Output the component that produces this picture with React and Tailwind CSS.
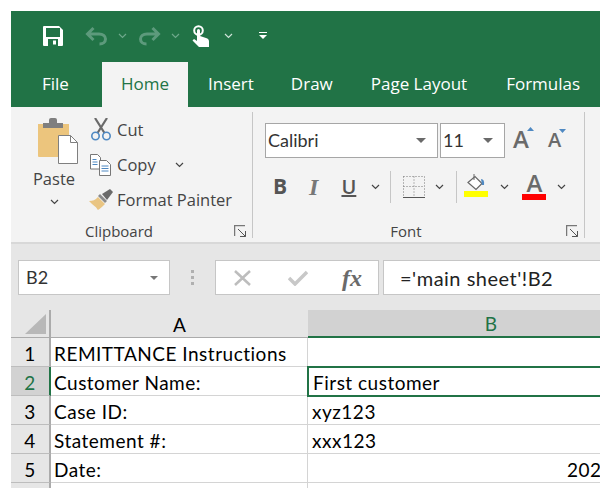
import React from 'react'

const UI = "font-['Open_Sans','Noto_Sans',sans-serif]"
const CELL = "font-['Lato','Open_Sans',sans-serif]"

const Chevron = ({ color = '#444', className = '' }) => (
  <svg width="9" height="6" viewBox="0 0 9 6" className={className}>
    <path d="M1 1l3.5 3.5L8 1" fill="none" stroke={color} strokeWidth="1.2" />
  </svg>
)

const Caret = () => (
  <svg width="10" height="5" viewBox="0 0 10 5"><path d="M0 0h10L5 5z" fill="#6a6a6a" /></svg>
)

const Launcher = () => (
  <svg width="13" height="13" viewBox="0 0 13 13">
    <path d="M.5 11V.5H11" fill="none" stroke="#777" strokeWidth="1.500" />
    <path d="M4 4l7.500 7.500M6 11.500h5.500V6" fill="none" stroke="#555" strokeWidth="1" />
  </svg>
)

const Sep = ({ className = '' }) => <div className={`w-px bg-[#c6c6c6] ${className}`}></div>

const SaveIcon = () => (
  <svg width="20" height="20" viewBox="0 0 20 20">
    <path fillRule="evenodd" d="M0 1a1 1 0 011-1h15l4 4v15a1 1 0 01-1 1H1a1 1 0 01-1-1zM3 2v9h14V2zM5 13v7h10v-7zM10 14.500h3v4h-3z" fill="#fff" />
  </svg>
)

const UndoIcon = ({ flip }) => (
  <svg width="23" height="20" viewBox="0 0 23 20" className={flip ? '-scale-x-100' : ''}>
    <path d="M8.500 2L2.500 8l6 6M3 8h11c4 0 6.500 2 6.500 5s-2.500 5-6 5" fill="none" stroke="#5d9a7c" strokeWidth="3" />
  </svg>
)

const TouchIcon = () => (
  <svg width="18" height="22" viewBox="0 0 18 22">
    <circle cx="6.500" cy="5.500" r="4.300" fill="none" stroke="#fff" strokeWidth="2" />
    <path d="M5 5.500a1.500 1.500 0 013 0V11l6 2c2 .5 3 1.500 3 3.500V22H7L.5 15.500l1.500-1.500 3 2z" fill="#fff" />
  </svg>
)

const PasteIcon = () => (
  <svg width="42" height="46" viewBox="0 0 42 46">
    <path d="M1 6h31v33H2a1 1 0 01-1-1z" fill="#ecc57d" />
    <path d="M6 5h6V2a2 2 0 012-2h4a2 2 0 012 2v3h6v5H6z" fill="#7f7f7f" />
    <path d="M21.500 17.500h12l7 7v21h-19z" fill="#fff" stroke="#7f7f7f" />
    <path d="M33.500 17.500v7h7" fill="none" stroke="#7f7f7f" />
  </svg>
)

const CutIcon = () => (
  <svg width="20" height="23" viewBox="0 0 20 23">
    <path d="M4 0l9.500 15M16 0L6.500 15" stroke="#6a6a6a" strokeWidth="2.200" fill="none" />
    <circle cx="4.500" cy="18" r="3.700" fill="none" stroke="#4f89c2" strokeWidth="1.600" />
    <circle cx="15.500" cy="18" r="3.700" fill="none" stroke="#4f89c2" strokeWidth="1.600" />
  </svg>
)

const CopyIcon = () => (
  <svg width="21" height="22" viewBox="0 0 21 22">
    <path d="M.5.500h7l3 3V15H.5z" fill="#fff" stroke="#777" />
    <path d="M9.500 6.500h7l4 4V21.500h-11z" fill="#fff" stroke="#777" />
    <path d="M2.500 5.500h4M2.500 8h5M2.500 10.500h5" stroke="#4f89c2" />
    <path d="M11.500 12h7M11.500 14.500h7M11.500 17h7" stroke="#4f89c2" />
  </svg>
)

const PainterIcon = () => (
  <svg width="24" height="21" viewBox="0 0 24 21">
    <path d="M0 12c4 0 6-1 9-4l7 7c-2 2-4 4-7 6-1-1-1.500-2.500-3-3.500C4 16 2 14 0 12z" fill="#e9c583" />
    <path d="M9 7l2-2 7 7-2 2z" fill="#8a8a8a" />
    <path d="M13 5l8-5 3 3-6 8z" fill="#6a6a6a" />
  </svg>
)

const BorderIcon = () => (
  <svg width="22" height="22" viewBox="0 0 22 22">
    <path d="M.5.500h21M.5.500v20M21.500.500v20M11 .500v20M.5 10.500h21" stroke="#777" strokeDasharray="1 2" fill="none" />
    <path d="M0 21.500h22" stroke="#555" />
  </svg>
)

const FillIcon = () => (
  <svg width="24" height="24" viewBox="0 0 24 24">
    <path d="M4 9.500l7-6 7 7-6 6z" fill="#fff" stroke="#666" strokeWidth="1.200" />
    <path d="M10 1v6" stroke="#666" />
    <path d="M17 6c2.500 0 3.500 2 3 6l-2 0z" fill="#4f89c2" />
    <rect x="0" y="18" width="24" height="6" fill="#ffff00" />
  </svg>
)

const GrowIcon = ({ up, size }) => (
  <div className="relative">
    <span className={`${UI} font-semibold text-[#6a6a6a] leading-none ${size}`}>A</span>
    <svg width="7" height="4" viewBox="0 0 7 4" className="absolute -right-[5px] top-0">
      <path d={up ? 'M0 4h7L3.500 0z' : 'M0 0h7L3.500 4z'} fill="#4f89c2" />
    </svg>
  </div>
)

const Combo = ({ text, width }) => (
  <div className={`flex items-center justify-between h-[35px] bg-white border border-[#a6a6a6] pl-[2px] pr-[11px] ${width}`}>
    <span className={`${CELL} text-[18px] text-[#333]`}>{text}</span>
    <Caret />
  </div>
)

const ClipItem = ({ icon, label, children }) => (
  <div className="flex items-center h-[35px]">
    <div className="w-[27px] flex justify-center">{icon}</div>
    <span className="ml-[3px] pt-[2px] text-[16.500px] text-[#444]">{label}</span>
    {children}
  </div>
)

const GroupLabel = ({ text }) => (
  <div className="flex items-center h-[22px] relative pr-[25px]">
    <span className="flex-1 text-center text-[15px] text-[#444]">{text}</span>
    <div className="absolute right-[5px] top-[5px]"><Launcher /></div>
  </div>
)

const rows = [
  { n: 1, a: 'REMITTANCE Instructions', b: '' },
  { n: 2, a: 'Customer Name:', b: 'First customer', selected: true },
  { n: 3, a: 'Case ID:', b: 'xyz123' },
  { n: 4, a: 'Statement #:', b: 'xxx123' },
  { n: 5, a: 'Date:', b: '2020', right: true },
  { n: '', a: '', b: '' },
]

const Row = ({ n, a, b, selected, right }) => (
  <div className={`flex h-[29px] ${CELL} text-[19px] tracking-[0.5px] leading-none text-black`}>
    <div className={`w-[40px] flex items-center justify-center pt-[2px] border-b border-[#bdbdbd] border-r-2 ${selected ? 'bg-[#d2d2d2] text-[#217346] border-r-[#217346]' : 'bg-[#e6e6e6] border-r-[#ababab]'}`}>{n}</div>
    <div className="w-[257px] flex items-center pt-[2px] pl-[3px] border-b border-r border-[#d4d4d4] whitespace-nowrap">{a}</div>
    <div className={`w-[366px] flex items-center pt-[2px] pl-[4px] whitespace-nowrap ${right ? 'justify-end pr-[61px]' : ''} ${selected ? 'border-2 border-[#217346] -mt-px h-[31px] -ml-px relative' : 'border-b border-[#d4d4d4]'}`}>{b}</div>
  </div>
)

const App = () => {
  return (
    <div className={`w-[600px] h-[488px] overflow-hidden bg-white pt-[11px] pl-[11px] ${UI}`}>
      <div className="w-[664px]">

        {/* title bar */}
        <div className="h-[51px] bg-[#217346] flex items-center pl-[32px] pb-[2px]">
          <SaveIcon />
          <div className="ml-[22px]"><UndoIcon /></div>
          <Chevron color="#6ea88b" className="ml-[10px]" />
          <div className="ml-[11px]"><UndoIcon flip /></div>
          <Chevron color="#6ea88b" className="ml-[10px]" />
          <div className="ml-[12px]"><TouchIcon /></div>
          <Chevron color="#cfe3d8" className="ml-[14px]" />
          <svg width="8" height="7" viewBox="0 0 8 7" className="ml-[26px]">
            <path d="M0 0h8v1H0zM0 3h8L4 7z" fill="#fff" />
          </svg>
        </div>

        {/* tabs */}
        <div className="h-[45px] bg-[#217346] flex text-[17px] text-white whitespace-nowrap">
          <div className="w-[91px] flex items-center pl-[31px] pb-[2px]">File</div>
          <div className="w-[86px] flex items-center justify-center pb-[2px] bg-[#f3f3f3] text-[#217346]">Home</div>
          <div className="flex items-center pb-[2px] ml-[20px]">Insert</div>
          <div className="flex items-center pb-[2px] ml-[37px]">Draw</div>
          <div className="flex items-center pb-[2px] ml-[38px]">Page Layout</div>
          <div className="flex items-center pb-[2px] ml-[39px]">Formulas</div>
        </div>

        {/* ribbon */}
        <div className="h-[137px] bg-[#f3f3f3] border-b-2 border-[#d8d8d8] flex">
          <div className="w-[241px] flex flex-col shrink-0">
            <div className="flex-1 flex pt-[5px]">
              <div className="w-[76px] flex flex-col items-center pt-[6px] pl-[10px]">
                <div className="ml-[7px]"><PasteIcon /></div>
                <span className="mt-[1px] text-[16.500px] text-[#444] leading-[28px]">Paste</span>
                <Chevron className="mt-[6px]" />
              </div>
              <div className="flex flex-col">
                <ClipItem icon={<CutIcon />} label="Cut" />
                <ClipItem icon={<CopyIcon />} label="Copy"><Chevron className="ml-[19px]" /></ClipItem>
                <ClipItem icon={<PainterIcon />} label="Format Painter" />
              </div>
            </div>
            <GroupLabel text="Clipboard" />
          </div>
          <Sep className="h-[126px] mt-[5px]" />

          <div className="w-[331px] flex flex-col shrink-0">
            <div className="flex-1 pt-[16px] pl-[12px]">
              <div className="flex items-center">
                <Combo text="Calibri" width="w-[173px]" />
                <Combo text="11" width="w-[65px] ml-[2px]" />
                <div className="ml-[8px]"><GrowIcon up size="text-[24px]" /></div>
                <div className="ml-[19px]"><GrowIcon size="text-[20px]" /></div>
              </div>
              <div className="flex items-center mt-[13px] h-[32px] text-[#555]">
                <span className={`${UI} font-bold text-[21px] ml-[8px]`}>B</span>
                <span className="font-['Liberation_Serif',serif] italic font-bold text-[24px] text-[#777] ml-[22px]">I</span>
                <span className={`${UI} font-semibold text-[20px] underline ml-[23px]`}>U</span>
                <Chevron className="ml-[15px]" />
                <Sep className="h-[32px] ml-[10px]" />
                <div className="ml-[12px]"><BorderIcon /></div>
                <Chevron className="ml-[10px]" />
                <Sep className="h-[32px] ml-[12px]" />
                <div className="ml-[7px] mb-[4px]"><FillIcon /></div>
                <Chevron className="ml-[12px]" />
                <div className="ml-[13px] mb-[3px] w-[24px] flex flex-col items-center">
                  <span className={`${UI} font-semibold text-[24px] leading-[22px] text-[#6a6a6a]`}>A</span>
                  <div className="w-[24px] h-[6px] bg-[#ff0000]"></div>
                </div>
                <Chevron className="ml-[11px]" />
              </div>
            </div>
            <GroupLabel text="Font" />
          </div>
          <Sep className="h-[126px] mt-[5px]" />
        </div>

        {/* formula bar */}
        <div className="h-[66px] bg-[#e6e6e6] flex items-center pl-[7px] pt-[1px]">
          <div className="w-[152px] h-[35px] bg-white border border-[#c6c6c6] flex items-center justify-between pl-[7px] pr-[11px]">
            <span className={`${CELL} text-[18px] text-[#333]`}>B2</span>
            <svg width="8" height="4" viewBox="0 0 8 4"><path d="M0 0h8L4 4z" fill="#777" /></svg>
          </div>
          <div className="w-[45px] flex flex-col items-center gap-[3px]">
            <div className="w-[3px] h-[3px] bg-[#b0b0b0]"></div>
            <div className="w-[3px] h-[3px] bg-[#b0b0b0]"></div>
            <div className="w-[3px] h-[3px] bg-[#b0b0b0]"></div>
          </div>
          <div className="w-[164px] h-[35px] bg-white border border-[#c6c6c6] flex items-center">
            <svg width="17" height="16" viewBox="0 0 17 16" className="ml-[18px]">
              <path d="M1 1l15 14M16 1L1 15" stroke="#bdbdbd" strokeWidth="2.500" />
            </svg>
            <svg width="20" height="16" viewBox="0 0 20 16" className="ml-[37px]">
              <path d="M1 8l6 6L19 2" fill="none" stroke="#c8c8c8" strokeWidth="3.500" />
            </svg>
            <span className="ml-[34px] font-['Liberation_Serif',serif] italic font-bold text-[24px] text-[#6a6a6a]">fx</span>
          </div>
          <div className="ml-[4px] w-[290px] h-[35px] bg-white border border-[#c6c6c6] flex items-center pl-[16px]">
            <span className={`${CELL} text-[20px] tracking-[0.5px] text-[#222] whitespace-nowrap`}>='main sheet'!B2</span>
          </div>
        </div>

        {/* column headers */}
        <div className={`flex h-[28px] ${CELL} text-[19px] bg-[#e6e6e6]`}>
          <div className="w-[40px] flex items-end justify-end pb-[3px] pr-[3px] border-b border-r-2 border-[#ababab]">
            <svg width="21" height="20" viewBox="0 0 21 20"><path d="M21 0v20H0z" fill="#b8b8b8" /></svg>
          </div>
          <div className="w-[257px] flex items-center justify-center pt-[3px] border-b border-[#ababab] text-black">A</div>
          <div className="w-[366px] flex items-center justify-center pt-[3px] bg-[#d2d2d2] border-b-2 border-[#217346] text-[#217346]">B</div>
        </div>

        {rows.map((r, i) => <Row key={i} {...r} />)}
      </div>
    </div>
  )
}

export default App
